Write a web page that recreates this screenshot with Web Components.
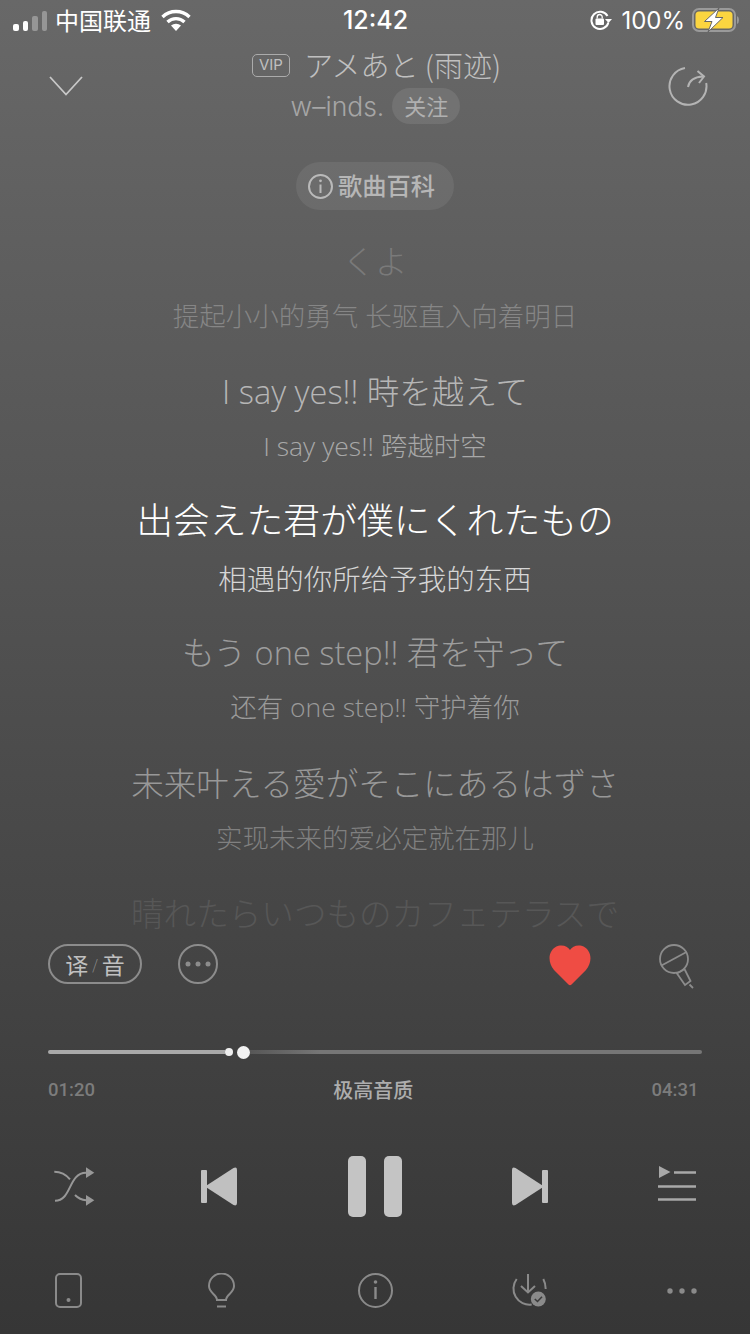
<!DOCTYPE html>
<html lang="zh-CN">
<head>
<meta charset="utf-8">
<title>アメあと</title>
<style>
    html, body { margin: 0; padding: 0; background: #363636; }
</style>
</head>
<body>

<player-screen>
    <status-bar></status-bar>
    <song-header>
        <span slot="title">アメあと (雨迹)</span>
        <span slot="artist">w–inds.</span>
    </song-header>
    <wiki-chip>歌曲百科</wiki-chip>
    <lyric-list>
        <lyric-line style="--main:#7a7a7a;--sub:#868686">くよ<span slot="sub">提起小小的勇气 长驱直入向着明日</span></lyric-line>
        <lyric-line style="--main:#b6b6b6;--sub:#a8a8a8">I say yes!! 時を越えて<span slot="sub">I say yes!! 跨越时空</span></lyric-line>
        <lyric-line active style="--main:#ffffff;--sub:#d6d6d6">出会えた君が僕にくれたもの<span slot="sub">相遇的你所给予我的东西</span></lyric-line>
        <lyric-line style="--main:#9d9d9d;--sub:#9a9a9a">もう one step!! 君を守って<span slot="sub">还有 one step!! 守护着你</span></lyric-line>
        <lyric-line style="--main:#989898;--sub:#808080;margin-top:1px">未来叶える愛がそこにあるはずさ<span slot="sub">实现未来的爱必定就在那儿</span></lyric-line>
        <lyric-line style="--main:#575757;--sub:#454545">晴れたらいつものカフェテラスで</lyric-line>
    </lyric-list>
    <tool-row></tool-row>
    <progress-bar current="01:20" total="04:31">极高音质</progress-bar>
    <transport-row></transport-row>
    <bottom-row></bottom-row>
</player-screen>

<script>
const CJK_JP = '"Noto Sans CJK JP", "Noto Sans CJK SC", sans-serif';
const CJK_SC = '"Noto Sans CJK SC", "Noto Sans CJK JP", sans-serif';

class BaseElement extends HTMLElement {
    constructor() {
        super();
        this.attachShadow({ mode: 'open' });
    }

    connectedCallback() {
        this.render();
    }
}

class PlayerScreen extends BaseElement {
    render() {
        this.shadowRoot.innerHTML = `
            <style>
                :host {
                    display: flex;
                    flex-direction: column;
                    width: 750px;
                    height: 1334px;
                    overflow: hidden;
                    background: linear-gradient(180deg, #686868, #363636);
                    font-family: ${CJK_SC};
                }
            </style>
            <slot></slot>
        `;
    }
}

class StatusBar extends BaseElement {
    render() {
        this.shadowRoot.innerHTML = `
            <style>
                :host {
                    display: flex;
                    align-items: center;
                    justify-content: space-between;
                    height: 40px;
                    padding: 0 11px 0 13px;
                    color: #fff;
                    font-size: 24px;
                    font-family: Inter, ${CJK_SC};
                }
                .side { flex: 1 1 0; display: flex; align-items: center; }
                .right { justify-content: flex-end; }
                .signal { display: flex; align-items: flex-end; gap: 4px; height: 20px; margin-right: 8px; margin-top: 1px; }
                .signal i { width: 5.5px; border-radius: 2px; background: #fff; }
                .signal i.off { background: #969696; }
                .carrier { margin-right: 10px; margin-top: -2px; }
                .clock { font-weight: 500; font-size: 25px; margin: -1px 1px 0 0; }
                .pct { margin: 0 7px 0 9px; }
                svg { display: block; }
            </style>
            <div class="side">
                <div class="signal">
                    <i style="height:7px"></i><i style="height:10px"></i>
                    <i class="off" style="height:15px"></i><i class="off" style="height:20px"></i>
                </div>
                <span class="carrier">中国联通</span>
                <svg width="30" height="22" viewBox="0 0 30 22" fill="none" stroke="#fff" stroke-width="3.4">
                    <path d="M1.5 8 A19.5 19.5 0 0 1 28.5 8"/>
                    <path d="M6.5 13 A12.5 12.5 0 0 1 23.5 13"/>
                    <path d="M15 22 L10 16.6 A7.4 7.4 0 0 1 20 16.6 Z" fill="#fff" stroke="none"/>
                </svg>
            </div>
            <span class="clock">12:42</span>
            <div class="side right">
                <svg width="22" height="20" viewBox="0 0 22 20" fill="none">
                    <path d="M17.5 6 A8.6 8.6 0 1 0 18.4 12.5" stroke="#fff" stroke-width="2"/>
                    <path d="M15 9 H22 L18.5 13 Z" fill="#fff"/>
                    <rect x="5.5" y="8.5" width="8.5" height="6.5" rx="1" fill="#fff"/>
                    <path d="M7.2 8.5 V7 A2.5 2.5 0 0 1 12.2 7 V8.5" stroke="#fff" stroke-width="1.3"/>
                </svg>
                <span class="pct">100%</span>
                <svg width="47" height="24" viewBox="0 0 47 24" fill="none">
                    <rect x="1" y="1" width="42" height="22" rx="6" stroke="#9a9a9a" stroke-width="2"/>
                    <rect x="3.5" y="3.5" width="37" height="17" rx="3.5" fill="#fbd540"/>
                    <path d="M45 8 Q47 9 47 12 Q47 15 45 16 Z" fill="#9a9a9a"/>
                    <path d="M27 0 L12.500 13.500 H20 L16 24 L31 9.500 H23.500 Z" fill="#fff" stroke="#666" stroke-width="1"/>
                </svg>
            </div>
        `;
    }
}

class SongHeader extends BaseElement {
    render() {
        this.shadowRoot.innerHTML = `
            <style>
                :host {
                    display: grid;
                    grid-template-columns: 1fr auto 1fr;
                    align-items: center;
                    padding: 7px 42px 0 42px;
                }
                .middle { display: flex; flex-direction: column; align-items: center; }
                .title { display: flex; align-items: center; height: 36px; margin-left: 3px; color: #c0c0c0; font-size: 29px; font-family: ${CJK_JP}; font-weight: 300; }
                .name { margin-top: -3px; }
                .vip {
                    box-sizing: border-box;
                    width: 38px; height: 23px;
                    margin-right: 14px;
                    border: 1.5px solid #ababab;
                    border-radius: 5px;
                    color: #c0c0c0;
                    font: 15px/20px Inter, sans-serif;
                    text-align: center;
                }
                .artist { display: flex; align-items: center; height: 36px; margin: 5px 0 0 1px; color: #a6a6a6; font-size: 26.5px; font-family: Inter, sans-serif; font-weight: 300; }
                .follow {
                    margin-left: 8px;
                    padding: 0 12px;
                    height: 36px;
                    border-radius: 18px;
                    background: rgba(255, 255, 255, 0.09);
                    color: #b0b0b0;
                    font: 22px/34px ${CJK_SC};
                }
                svg { display: block; }
                .down { margin-left: 7px; }
                .share { justify-self: end; }
            </style>
            <svg class="down" width="34" height="20" viewBox="0 0 34 20" fill="none" stroke="#c8c8c8" stroke-width="1.8">
                <path d="M1 1 L17 18.5 L33 1"/>
            </svg>
            <div class="middle">
                <div class="title"><span class="vip">VIP</span><span class="name"><slot name="title"></slot></span></div>
                <div class="artist"><slot name="artist"></slot><span class="follow">关注</span></div>
            </div>
            <svg class="share" width="40" height="40" viewBox="0 0 40 40" fill="none" stroke="#b4b4b4" stroke-width="2">
                <path d="M17 2 A18.5 18.5 0 1 0 38.2 17"/>
                <path d="M20 21 C21 15 26 11 35 10.5"/>
                <path d="M29.5 5 L36 10.5 L31 17"/>
            </svg>
        `;
    }
}

class WikiChip extends BaseElement {
    render() {
        this.shadowRoot.innerHTML = `
            <style>
                :host {
                    display: flex;
                    align-items: center;
                    align-self: center;
                    box-sizing: border-box;
                    height: 48px;
                    margin-top: 38px;
                    padding: 0 19px 0 12px;
                    border-radius: 24px;
                    background: rgba(255, 255, 255, 0.07);
                    color: #b6b6b6;
                    font-size: 24.3px;
                    font-weight: 500;
                }
                svg { display: block; margin-right: 5px; }
                span { margin-top: -3px; }
            </style>
            <svg width="25" height="25" viewBox="0 0 25 25" fill="none" stroke="#bababa" stroke-width="2">
                <circle cx="12.5" cy="12.5" r="11.5"/>
                <path d="M12.5 10.5 V19"/>
                <circle cx="12.5" cy="6.8" r="1.4" fill="#bababa" stroke="none"/>
            </svg>
            <span><slot></slot></span>
        `;
    }
}

class LyricList extends BaseElement {
    render() {
        this.shadowRoot.innerHTML = `
            <style>
                :host {
                    display: flex;
                    flex-direction: column;
                    gap: 36px;
                    height: 698px;
                    margin-top: 30px;
                    overflow: hidden;
                    flex: none;
                }
            </style>
            <slot></slot>
        `;
    }
}

class LyricLine extends BaseElement {
    render() {
        const active = this.hasAttribute('active');
        this.shadowRoot.innerHTML = `
            <style>
                :host {
                    display: flex;
                    flex-direction: column;
                    align-items: center;
                    white-space: nowrap;
                    flex: none;
                    font-family: "Open Sans", ${CJK_JP};
                    font-weight: 300;
                }
                .main {
                    height: ${active ? 40 : 44}px;
                    line-height: ${active ? 40 : 44}px;
                    font-size: ${active ? 36.8 : 32.6}px;
                    color: var(--main);
                }
                .sub {
                    height: ${active ? 32 : 36}px;
                    margin-top: ${active ? 23 : 14}px;
                    line-height: ${active ? 32 : 36}px;
                    font-size: ${active ? 28.5 : 26.5}px;
                    color: var(--sub);
                    font-family: "Open Sans", ${CJK_SC};
                }
            </style>
            <div class="main"><slot></slot></div>
            <div class="sub"><slot name="sub"></slot></div>
        `;
    }
}

class ToolRow extends BaseElement {
    render() {
        this.shadowRoot.innerHTML = `
            <style>
                :host {
                    display: flex;
                    align-items: flex-start;
                    margin-top: 6px;
                    padding: 0 56px 0 48px;
                    height: 44px;
                    flex: none;
                }
                .pill {
                    box-sizing: border-box;
                    display: flex;
                    align-items: center;
                    justify-content: center;
                    width: 94px; height: 40px;
                    border: 2px solid #8c8c8c;
                    border-radius: 20px;
                    color: #c0c0c0;
                    font-size: 23px;
                }
                .pill small { margin: 0 4px; color: #909090; font-size: 14px; font-weight: 300; }
                svg { display: block; }
                .more { margin-left: 36px; }
                .heart { margin-left: auto; margin-top: 1px; }
                .mic { margin-left: 67px; }
            </style>
            <div class="pill">译<small>/</small>音</div>
            <svg class="more" width="40" height="40" viewBox="0 0 40 40" fill="none">
                <circle cx="20" cy="20" r="19" stroke="#8c8c8c" stroke-width="2"/>
                <g fill="#8c8c8c"><circle cx="10" cy="20" r="2.5"/><circle cx="20" cy="20" r="2.5"/><circle cx="30" cy="20" r="2.5"/></g>
            </svg>
            <svg class="heart" width="42" height="41" viewBox="0 0 42 41">
                <path d="M19.5 39.5 L5 25 C-2 17 -1 4 9.500 0.800 C14.500 -0.500 19 1.800 21 5 C23 1.800 27.500 -0.500 32.500 0.800 C43 4 44 17 37 25 L22.500 39.500 Q21 41 19.500 39.500 Z" fill="#ef4c44"/>
            </svg>
            <svg class="mic" width="36" height="45" viewBox="0 0 36 45" fill="none" stroke="#8c8c8c" stroke-width="1.8">
                <circle cx="16" cy="15" r="14"/>
                <path d="M3.5 21.500 L28.500 8"/>
                <path d="M19 29.500 L26.500 25 L32.500 37 L27 41 Z"/>
                <path d="M31.500 40.500 L35 44"/>
            </svg>
        `;
    }
}

class ProgressBar extends BaseElement {
    render() {
        const current = this.getAttribute('current') || '00:00';
        const total = this.getAttribute('total') || '00:00';
        this.shadowRoot.innerHTML = `
            <style>
                :host {
                    display: block;
                    margin-top: 58px;
                    padding: 0 48px;
                    flex: none;
                }
                .track { display: flex; align-items: center; height: 12px; }
                .done { width: 177px; height: 4px; border-radius: 2px 0 0 2px; background: #a9a9a9; }
                .dot { width: 8px; height: 8px; border-radius: 50%; background: #eee; }
                .knob { width: 13px; height: 13px; margin-left: 3.500px; border-radius: 50%; background: #f2f2f2; }
                .rest { flex: 1; height: 4px; border-radius: 0 2px 2px 0; background: linear-gradient(90deg, #575757, #767676 70px); }
                .times {
                    display: flex;
                    align-items: center;
                    justify-content: space-between;
                    height: 28px;
                    margin-top: 18px;
                    padding-right: 3.500px;
                }
                .time { width: 60px; color: #7c7c7c; font: 500 18.5px/28px Roboto, sans-serif; }
                .time:last-child { text-align: right; }
                .quality { margin-top: -2px; color: #adadad; font-size: 20px; font-weight: 500; }
            </style>
            <div class="track"><div class="done"></div><div class="dot"></div><div class="knob"></div><div class="rest"></div></div>
            <div class="times">
                <span class="time">${current}</span>
                <span class="quality"><slot></slot></span>
                <span class="time">${total}</span>
            </div>
        `;
    }
}

class TransportRow extends BaseElement {
    render() {
        this.shadowRoot.innerHTML = `
            <style>
                :host {
                    display: flex;
                    align-items: center;
                    gap: 110px;
                    height: 61px;
                    margin-top: 52px;
                    padding-left: 54px;
                    flex: none;
                }
                svg { display: block; }
                .shuffle { margin-right: -4px; }
                .prev { margin-right: 1px; }
                .pause { display: flex; gap: 18px; }
                .pause i { width: 18px; height: 61px; border-radius: 5px; background: #c4c4c4; }
                .queue { margin-top: -7px; }
            </style>
            <svg class="shuffle" width="41" height="39" viewBox="0 0 41 39" fill="none" stroke="#989898" stroke-width="2">
                <path d="M0.300 4.700 C7 4.700 12 7.500 16 12.300"/>
                <path d="M1 33.700 C18 33.700 14 6 32 5.700"/>
                <path d="M21 28 C24 31 28 33 32 33.300"/>
                <path d="M32 0.300 L40.300 5.700 L32 11 Z" fill="#989898" stroke="none"/>
                <path d="M32 28 L40.300 33.300 L32 38.700 Z" fill="#989898" stroke="none"/>
            </svg>
            <svg class="prev" width="36" height="39" viewBox="0 0 36 39" fill="#c0c0c0">
                <rect x="0" y="3" width="6" height="33" rx="1"/>
                <path d="M4 19.500 L32.500 1 Q36 -0.500 36 3 V36 Q36 39.500 32.500 38 Z"/>
            </svg>
            <div class="pause"><i></i><i></i></div>
            <svg width="36" height="39" viewBox="0 0 36 39" fill="#c0c0c0">
                <rect x="30" y="3" width="6" height="33" rx="1"/>
                <path d="M32 19.500 L3.500 1 Q0 -0.500 0 3 V36 Q0 39.500 3.500 38 Z"/>
            </svg>
            <svg class="queue" width="38" height="35" viewBox="0 0 38 35" fill="none" stroke="#a8a8a8" stroke-width="2.500">
                <path d="M1 0 L12.500 6 L1 12 Z" fill="#a8a8a8" stroke="none"/>
                <path d="M16 6.500 H38"/>
                <path d="M0 20.500 H38"/>
                <path d="M0 33.500 H38"/>
            </svg>
        `;
    }
}

class BottomRow extends BaseElement {
    render() {
        this.shadowRoot.innerHTML = `
            <style>
                :host {
                    display: grid;
                    grid-template-columns: 136px 170px 138px 170px 136px;
                    justify-items: center;
                    align-items: center;
                    height: 35px;
                    margin-top: 56px;
                    flex: none;
                }
                svg { display: block; }
            </style>
            <svg width="27" height="35" viewBox="0 0 27 35" fill="none" stroke="#8a8a8a" stroke-width="2">
                <rect x="1" y="1" width="25" height="33" rx="4"/>
                <circle cx="13.500" cy="27" r="2" fill="#8a8a8a" stroke="none"/>
            </svg>
            <svg width="27" height="35" viewBox="0 0 27 35" fill="none" stroke="#8a8a8a" stroke-width="2">
                <path d="M9 27 C9 21.500 1 20 1 13 A12.500 12.500 0 0 1 26 13 C26 20 18 21.500 18 27 Z"/>
                <path d="M9 33.500 H18"/>
            </svg>
            <svg width="35" height="35" viewBox="0 0 35 35" fill="none" stroke="#8a8a8a" stroke-width="2">
                <circle cx="17.500" cy="17.500" r="16.500"/>
                <path d="M17.500 14 V26" stroke-width="2.400"/>
                <circle cx="17.500" cy="9" r="1.800" fill="#8a8a8a" stroke="none"/>
            </svg>
            <svg width="36" height="35" viewBox="0 0 36 35" fill="none" stroke="#8a8a8a" stroke-width="2">
                <path d="M5.700 6 A16 16 0 0 0 20.700 31.500"/>
                <path d="M32.300 6 Q34.500 10 34.700 16"/>
                <path d="M17 1 V19"/>
                <path d="M10 13 L17 19.500 L24 13"/>
                <circle cx="27.300" cy="26" r="7.500" fill="#8a8a8a" stroke="none"/>
                <path d="M23.800 26 L26.500 28.500 L31 23.800" stroke="#3a3a3a" stroke-width="1.600"/>
            </svg>
            <svg width="30" height="8" viewBox="0 0 30 8" fill="#8a8a8a">
                <circle cx="3" cy="4" r="2.700"/><circle cx="15" cy="4" r="2.700"/><circle cx="27" cy="4" r="2.700"/>
            </svg>
        `;
    }
}

customElements.define('player-screen', PlayerScreen);
customElements.define('status-bar', StatusBar);
customElements.define('song-header', SongHeader);
customElements.define('wiki-chip', WikiChip);
customElements.define('lyric-list', LyricList);
customElements.define('lyric-line', LyricLine);
customElements.define('tool-row', ToolRow);
customElements.define('progress-bar', ProgressBar);
customElements.define('transport-row', TransportRow);
customElements.define('bottom-row', BottomRow);
</script>
</body>
</html>
